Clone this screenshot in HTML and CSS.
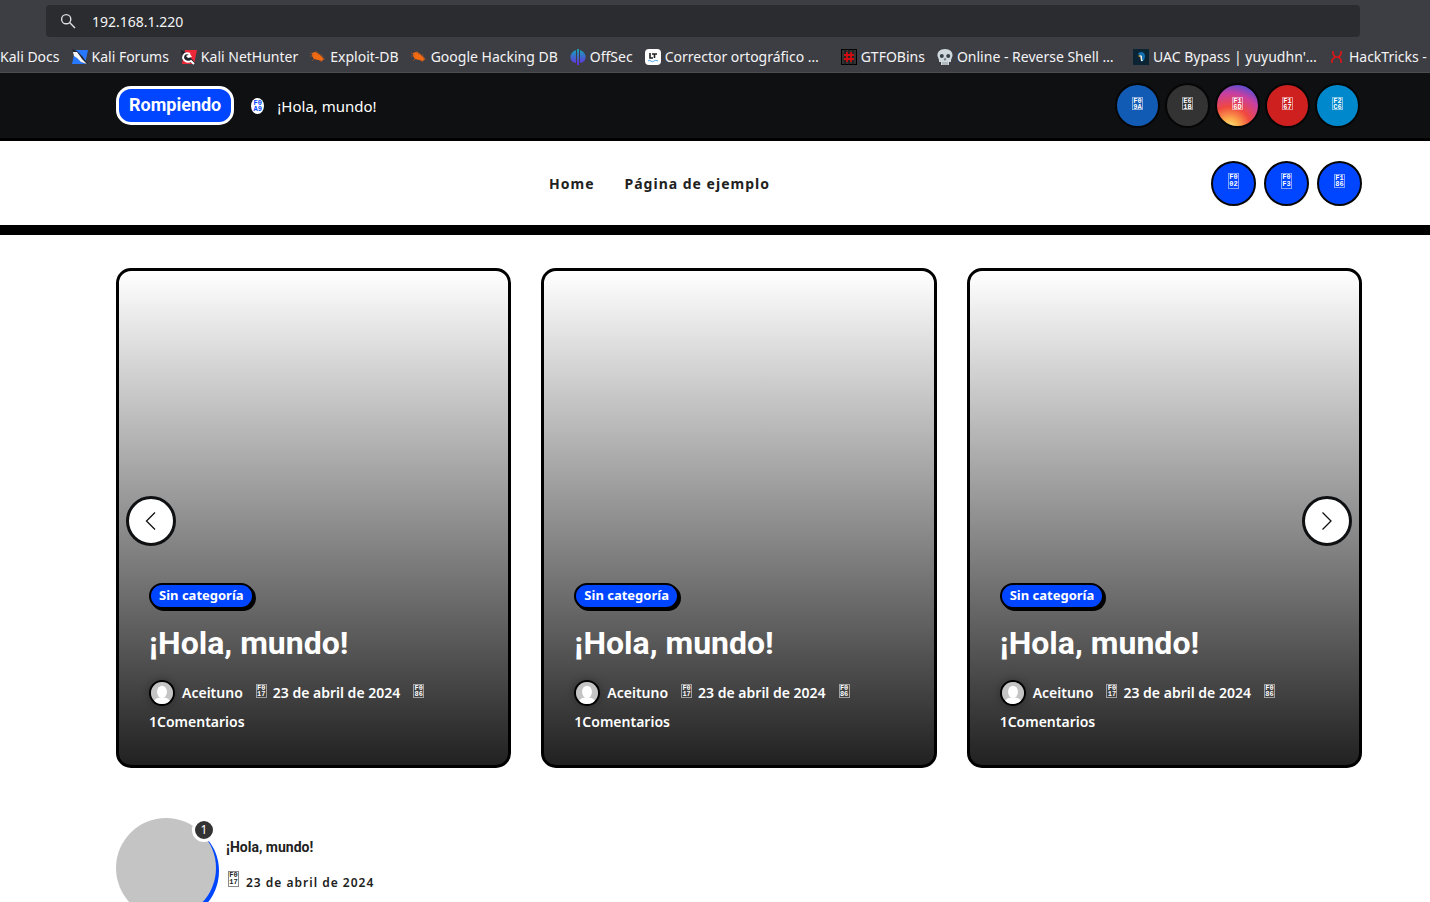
FILE: index.html
```html
<!DOCTYPE html>
<html lang="es">
<head>
<meta charset="utf-8">
<meta name="viewport" content="width=device-width, initial-scale=1">
<title>Rompiendo</title>
<link rel="stylesheet" href="styles.css">
</head>
<body>
<div class="browser">
  <label class="address">
    <svg class="address-icon" viewBox="0 0 16 16" aria-hidden="true"><circle cx="6.2" cy="6.2" r="4.6"/><path d="M9.6 9.6 15 15"/></svg>
    <input class="address-input" type="text" value="192.168.1.220" aria-label="Dirección">
  </label>
  <nav class="bookmarks" aria-label="Marcadores">
    <a class="bookmark" href="#">Kali Docs</a>
    <a class="bookmark" href="#"><svg viewBox="0 0 16 16"><path fill="#2777ff" d="M3 1h13l-3 14H0z"/><path fill="#20232a" d="M0 0l5 2 5 5 6 8-5-1-6-5z"/><path fill="#f4f6fa" d="M1 3l4 0 3 4 2 3 5 5-6-2-4-4-3-2z"/></svg>Kali Forums</a>
    <a class="bookmark" href="#"><svg viewBox="0 0 16 16"><path fill="#ed2939" d="M4 1h12l-3 14H1z"/><path fill="#20232a" d="M0 1l6 3 9 11-9-2-5-4z"/><path d="M9 5C5 3 2 5 2 9c1 3 5 5 8 3l3 3" fill="none" stroke="#fff" stroke-width="2"/><path fill="#fff" d="M5 7l4-2 2 3-4 1z"/></svg>Kali NetHunter</a>
    <a class="bookmark" href="#"><svg viewBox="0 0 16 16"><path fill="#f26a11" d="M2 4l3-1 3 1 3 3 3 3-2 2-4-1-4-1-2-3z"/><path d="M0 7h3M0 4l4 2M6 2l2 4M11 5l2 4M4 10l-2 2M9 11l3 2M12 10h3" stroke="#a95428" stroke-width=".7" fill="none"/></svg>Exploit-DB</a>
    <a class="bookmark" href="#"><svg viewBox="0 0 16 16"><path fill="#f26a11" d="M2 4l3-1 3 1 3 3 3 3-2 2-4-1-4-1-2-3z"/><path d="M0 7h3M0 4l4 2M6 2l2 4M11 5l2 4M4 10l-2 2M9 11l3 2M12 10h3" stroke="#a95428" stroke-width=".7" fill="none"/></svg>Google Hacking DB</a>
    <a class="bookmark" href="#"><svg viewBox="0 0 16 16"><defs><linearGradient id="off" gradientUnits="userSpaceOnUse" x1="0" y1="0" x2="0" y2="16"><stop stop-color="#14a4b8"/><stop offset="1" stop-color="#6a2be0"/></linearGradient></defs><path fill="url(#off)" d="M6 1v13C-1 13-2 4 6 1zM7 0h2v16H7zM10 1v13c7-1 8-10 0-13z"/></svg>OffSec</a>
    <a class="bookmark bookmark-long" href="#"><svg viewBox="0 0 16 16"><rect width="16" height="16" rx="4" fill="#fff"/><path d="M5 4v5h3M7 5h5M9.500 5v4" fill="none" stroke="#222" stroke-width="1.600"/><path d="M3 12q1.500-1.500 3 0t3 0 4 0" fill="none" stroke="#4aa8f0"/></svg>Corrector ortográfico …</a>
    <a class="bookmark" href="#"><svg viewBox="0 0 16 16"><path fill="#000" d="M0 0h16v16H0z"/><path fill="#333" d="M1 1h14v14H1z"/><path d="M4 0v16M8 0v16M12 0v16" stroke="#151515"/><path d="M6 3v10M10 3v10M3 6h10M3 10h10" stroke="#d00b12" stroke-width="1.800"/></svg>GTFOBins</a>
    <a class="bookmark bookmark-long" href="#"><svg viewBox="0 0 16 16"><path fill="#cfd8dc" d="M8 0C3 0 0 3 .5 7L2 11v2h2v3h8v-3h2v-2l1.500-4C16 3 13 0 8 0z"/><circle cx="4.800" cy="7" r="2" fill="#37424a"/><circle cx="11.200" cy="7" r="2" fill="#37424a"/><path d="M7 11l1-2 1 2zM6 13v3M8 13v3M10 13v3" fill="#37424a" stroke="#7d8a90" stroke-width=".8"/></svg>Online - Reverse Shell …</a>
    <a class="bookmark bookmark-long" href="#"><svg viewBox="0 0 16 16"><path fill="#0a2433" d="M0 0h16v16H0z"/><path fill="#1270b0" d="M5 5c1-3 7-3 7 2 0 3-1 5-4 6 2-3 0-5-3-8z"/><path fill="#f3efe2" d="M7 6l2 1v3l1 2H8z"/><path fill="#e6a93c" d="M5 7l2-1v2z"/></svg>UAC Bypass | yuyudhn'…</a>
    <a class="bookmark" href="#"><svg viewBox="0 0 16 16"><path d="M4 2v3l2 3h4l2-3V2M3 14v-3l3-3h4l2 3v3" fill="none" stroke="#e01515" stroke-width="1.600"/></svg>HackTricks -</a>
  </nav>
</div>

<div class="topbar">
  <strong class="flash">Rompiendo</strong>
  <span class="bolt"><span class="code">F0<br>A9</span></span>
  <a class="ticker" href="#">¡Hola, mundo!</a>
  <nav class="social" aria-label="Redes sociales">
    <a class="round facebook" href="#"><span class="code short">F0<br>9A</span></a>
    <a class="round twitter" href="#"><span class="code short">E6<br>1B</span></a>
    <a class="round instagram" href="#"><span class="code short">F1<br>6D</span></a>
    <a class="round youtube" href="#"><span class="code short">F1<br>67</span></a>
    <a class="round telegram" href="#"><span class="code short">F2<br>C6</span></a>
  </nav>
</div>

<header class="header">
  <nav class="menu">
    <a href="#">Home</a>
    <a href="#">Página de ejemplo</a>
  </nav>
  <div class="actions">
    <button class="round" type="button"><span class="code tall">F0<br>02</span></button>
    <button class="round" type="button"><span class="code tall">F0<br>F3</span></button>
    <button class="round" type="button"><span class="code">F1<br>86</span></button>
  </div>
</header>

<main class="main">
  <section class="slider">
    <article class="card">
      <a class="category" href="#">Sin categoría</a>
      <h2 class="card-title"><a href="#">¡Hola, mundo!</a></h2>
      <div class="meta">
        <a class="author" href="#"><svg class="avatar" viewBox="0 0 20 20"><path fill="#c4c4c4" d="M0 0h20v20H0z"/><ellipse cx="10" cy="9" rx="4.500" ry="5.500" fill="#fff"/><path fill="#fff" d="M2 20q0-5 6-6h4q6 1 6 6z"/></svg>Aceituno</a>
        <span class="date"><span class="code">F0<br>17</span>23 de abril de 2024</span>
        <span class="code">F0<br>86</span>
        <a class="comments" href="#">1Comentarios</a>
      </div>
    </article>
    <article class="card">
      <a class="category" href="#">Sin categoría</a>
      <h2 class="card-title"><a href="#">¡Hola, mundo!</a></h2>
      <div class="meta">
        <a class="author" href="#"><svg class="avatar" viewBox="0 0 20 20"><path fill="#c4c4c4" d="M0 0h20v20H0z"/><ellipse cx="10" cy="9" rx="4.500" ry="5.500" fill="#fff"/><path fill="#fff" d="M2 20q0-5 6-6h4q6 1 6 6z"/></svg>Aceituno</a>
        <span class="date"><span class="code">F0<br>17</span>23 de abril de 2024</span>
        <span class="code">F0<br>86</span>
        <a class="comments" href="#">1Comentarios</a>
      </div>
    </article>
    <article class="card">
      <a class="category" href="#">Sin categoría</a>
      <h2 class="card-title"><a href="#">¡Hola, mundo!</a></h2>
      <div class="meta">
        <a class="author" href="#"><svg class="avatar" viewBox="0 0 20 20"><path fill="#c4c4c4" d="M0 0h20v20H0z"/><ellipse cx="10" cy="9" rx="4.500" ry="5.500" fill="#fff"/><path fill="#fff" d="M2 20q0-5 6-6h4q6 1 6 6z"/></svg>Aceituno</a>
        <span class="date"><span class="code">F0<br>17</span>23 de abril de 2024</span>
        <span class="code">F0<br>86</span>
        <a class="comments" href="#">1Comentarios</a>
      </div>
    </article>
    <button class="arrow arrow-prev" type="button" aria-label="Anterior"><svg viewBox="0 0 20 20"><path d="M14 1.500 5.500 10l8.500 8.500"/></svg></button>
    <button class="arrow arrow-next" type="button" aria-label="Siguiente"><svg viewBox="0 0 20 20"><path d="M5.500 1.500 14 10l-8.500 8.500"/></svg></button>
  </section>

  <article class="trend">
    <div class="thumb"><span class="count">1</span></div>
    <div class="trend-text">
      <h3 class="trend-title"><a href="#">¡Hola, mundo!</a></h3>
      <div class="trend-date"><span class="code tall">F0<br>17</span>23 de abril de 2024</div>
    </div>
  </article>
</main>
</body>
</html>
```
FILE: styles.css
```css
* { box-sizing: border-box; }

body {
  margin: 0;
  background: #fff;
  color: #212121;
  font-family: "Noto Sans", sans-serif;
  overflow-x: hidden;
}

a { color: inherit; text-decoration: none; }
button { padding: 0; font: inherit; cursor: pointer; }
h2, h3 { margin: 0; font-family: Roboto, sans-serif; font-weight: 700; }

/* browser chrome */
.browser {
  height: 73px;
  padding-top: 5px;
  background: #3d3e43;
  border-bottom: 1px solid #4b4b50;
  color: #f4f4f6;
  overflow: hidden;
}

.address {
  display: flex;
  align-items: center;
  gap: 16px;
  height: 32px;
  margin: 0 70px 0 46px;
  padding-left: 14px;
  border-radius: 4px;
  background: #2b2c30;
}

.address-icon {
  width: 16px;
  height: 16px;
  fill: none;
  stroke: #e0e0e2;
  stroke-width: 1.4;
}

.address-input {
  flex: 1;
  padding: 0;
  border: 0;
  outline: 0;
  background: none;
  color: inherit;
  font: 14px "Noto Sans", sans-serif;
}

.bookmarks {
  display: flex;
  gap: 12px;
  padding-top: 9px;
}

.bookmark {
  display: flex;
  flex: none;
  align-items: center;
  gap: 4px;
  font-size: 14px;
  line-height: 22px;
  white-space: nowrap;
}

.bookmark svg { flex: none; width: 16px; height: 16px; }
.bookmark-long { width: 184px; overflow: hidden; }

/* four-digit code box */
.code {
  display: block;
  flex: none;
  width: 11px;
  height: 14px;
  border: 1px solid rgb(255 255 255 / 50%);
  color: #fff;
  font: 700 7px/6px "Liberation Mono", monospace;
  text-align: center;
}

.short { height: 13px; }
.tall { height: 16px; line-height: 7px; }

/* top bar */
.topbar {
  display: flex;
  align-items: center;
  height: 68px;
  padding: 0 70px 0 116px;
  border-bottom: 3px solid #000;
  background: #0f1012;
  color: #fff;
}

.flash {
  padding: 2px 10px 4px;
  border: 3px solid #fff;
  border-radius: 15px;
  background: #0045ff;
  font: 700 18px/27px Roboto, sans-serif;
}

.bolt {
  display: flex;
  align-items: center;
  justify-content: center;
  width: 13px;
  height: 16px;
  margin: 0 13px 0 17px;
  border-radius: 50%;
  background: #fff;
}

.bolt .code { border-color: transparent; color: #0045ff; }
.ticker { font-size: 15px; line-height: 20px; }
.social { display: flex; gap: 5px; margin-left: auto; }

.round {
  display: flex;
  align-items: center;
  justify-content: center;
  width: 45px;
  height: 45px;
  padding-bottom: 4px;
  border: 2px solid #060607;
  border-radius: 50%;
  background: #0045ff;
}

.facebook { background: #125bb5; }
.twitter { background: #333; }
.instagram { background: radial-gradient(circle at 30% 107%, #fdf497 0%, #fdb14d 18%, #f0483f 42%, #c83fa0 68%, #3f52e0 92%); }
.youtube { background: #cd201f; }
.telegram { background: #08c; }

/* site header */
.header {
  display: flex;
  align-items: center;
  height: 94px;
  padding: 0 68px 0 116px;
  border-bottom: 10px solid #000;
}

.menu {
  display: flex;
  flex: 1;
  justify-content: center;
  gap: 30px;
  font-size: 14px;
  font-weight: 700;
  letter-spacing: 1px;
}

.actions { display: flex; gap: 8px; margin-left: 8px; }

/* post slider */
.main { padding: 33px 68px 0 116px; }

.slider {
  position: relative;
  display: grid;
  grid-template-columns: repeat(3, minmax(0, 1fr));
  gap: 30px;
}

.card {
  display: flex;
  flex-direction: column;
  align-items: flex-start;
  justify-content: flex-end;
  min-height: 500px;
  padding: 0 30px 29px;
  border: 3px solid #000;
  border-radius: 15px;
  background: linear-gradient(#fff, #212121);
  color: #fff;
}

.category {
  padding: 0 8px 2px;
  border: 2px solid #000;
  border-radius: 13px;
  background: #0045ff;
  box-shadow: 2px 2px 0 #000;
  font-size: 13px;
  font-weight: 700;
  line-height: 20px;
}

.card-title {
  margin: 14px 0 15px;
  font-size: 32px;
  line-height: 40px;
}

.meta {
  display: flex;
  flex-wrap: wrap;
  align-items: center;
  column-gap: 13px;
  font-size: 14px;
  font-weight: 600;
  line-height: 29px;
}

.meta .code { margin-bottom: 4px; }
.author { display: flex; align-items: center; gap: 7px; }

.avatar {
  width: 26px;
  height: 26px;
  border: 2px solid #000;
  border-radius: 50%;
  box-shadow: 0 0 8px rgb(0 0 0 / 30%);
}

.date { display: flex; align-items: center; gap: 6px; }
.comments { flex-basis: 100%; }

.arrow {
  position: absolute;
  top: 228px;
  display: flex;
  align-items: center;
  justify-content: center;
  width: 50px;
  height: 50px;
  border: 3px solid #0f1012;
  border-radius: 50%;
  background: #fff;
}

.arrow svg { width: 20px; height: 20px; fill: none; stroke: #111; stroke-width: 1.3; }
.arrow-prev { left: 10px; }
.arrow-next { right: 10px; }

/* trending post */
.trend { display: flex; gap: 10px; margin-top: 50px; }

.thumb {
  position: relative;
  flex: none;
  width: 100px;
  height: 100px;
  border-radius: 50%;
  background: #c4c4c4;
  box-shadow: 3px 3px 0 #0045ff;
}

.count {
  position: absolute;
  top: 0;
  right: 0;
  width: 24px;
  height: 24px;
  border: 3px solid #fff;
  border-radius: 50%;
  background: #333;
  color: #fff;
  font-size: 12px;
  line-height: 18px;
  text-align: center;
}

.trend-text { padding-top: 20px; }
.trend-title { font-size: 14px; line-height: 18px; }

.trend-date {
  display: flex;
  align-items: center;
  gap: 7px;
  margin-top: 15px;
  padding-left: 2px;
  font-size: 12px;
  font-weight: 600;
  letter-spacing: 1px;
  line-height: 24px;
}

.trend-date .code { margin-bottom: 8px; border-color: #888; color: #212121; letter-spacing: 0; }
```
